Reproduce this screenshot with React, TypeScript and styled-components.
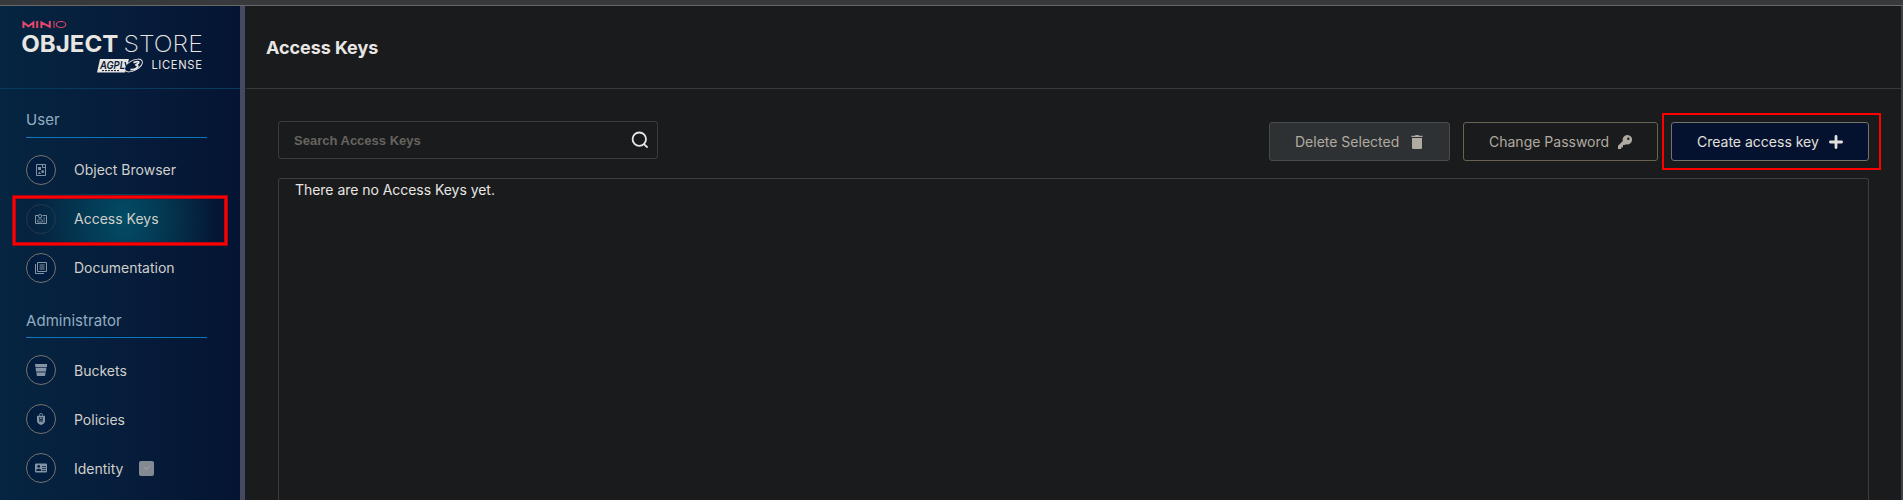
import React from "react";
import styled, { createGlobalStyle } from "styled-components";

const Global = createGlobalStyle`
  *, *::before, *::after { box-sizing: border-box; }
  body { margin: 0; background: #1a1b1d; overflow: hidden; }
  body, button { font-family: Inter, "Liberation Sans", sans-serif; }
`;

const Page = styled.div`
  height: 500px;
  display: flex;
  flex-direction: column;
  overflow: hidden;
`;
const TopStrip = styled.div`
  height: 6px;
  flex: none;
  background: #38393d;
  border-bottom: 1px solid #66686a;
`;
const Body = styled.div`
  flex: 1;
  min-height: 0;
  display: flex;
  border-right: 2px solid #3c4146;
`;
const Sidebar = styled.aside`
  width: 246px;
  flex: none;
  border-right: 1px solid #14193a;
  display: flex;
`;
const SidebarInner = styled.div`
  width: 240px;
  background: linear-gradient(90deg, #052541 0%, #061d3b 50%, #051433 100%);
`;
const Divider = styled.div`
  width: 5px;
  background: #464a5c;
`;
const LogoArea = styled.div`
  height: 83px;
  border-bottom: 1px solid #073a5c;
`;
const Group = styled.nav<{ $top: number }>`
  margin: ${(p) => p.$top}px 0 0 26px;
  width: 181px;
`;
const GroupTitle = styled.h2<{ $drop?: number }>`
  margin: 0 0 7px;
  height: 30px;
  padding-top: ${(p) => p.$drop ?? 0}px;
  line-height: 24px;
  border-bottom: 1px solid #0d76bb;
  font-size: 15px;
  font-weight: 400;
  letter-spacing: 0.05px;
  color: #92adc1;
`;
const Item = styled.a<{ $active?: boolean }>`
  position: relative;
  height: 49px;
  margin: 0 -21px 0 -14px;
  padding-left: 14px;
  display: flex;
  align-items: center;
  font-size: 14px;
  color: #d0cfcb;
  background: ${(p) => (p.$active ? "radial-gradient(ellipse 92px 150px at 112px 50%, #034b63 0%, rgba(3,62,88,.8) 45%, rgba(4,34,62,0) 100%)" : "none")};
`;
const Label = styled.span<{ $low?: boolean }>`
  padding-top: ${(p) => (p.$low ? 2 : 0)}px;
`;
const Circle = styled.span<{ $active?: boolean }>`
  width: 30px;
  height: 30px;
  margin-right: 18px;
  border: 1px solid ${(p) => (p.$active ? "#24384a" : "#77736b")};
  border-radius: 50%;
  background: ${(p) => (p.$active ? "transparent" : "#021d3d")};
  color: #8494a4;
  display: grid;
  place-items: center;
`;
const Expand = styled.span`
  width: 15px;
  height: 15px;
  margin: 1px 0 0 15.5px;
  border-radius: 2px;
  background: #848a94;
  display: grid;
  place-items: center;
`;
const Highlight = styled.span<{ $inset: string; $soft?: boolean }>`
  position: absolute;
  inset: ${(p) => p.$inset};
  border: 2px solid #fe0000;
  box-shadow: ${(p) => (p.$soft ? "0 0 0 1px #9c0a18, inset 0 0 0 1px #b00814" : "none")};
  pointer-events: none;
`;
const Main = styled.main`
  flex: 1;
  min-width: 0;
  display: flex;
  flex-direction: column;
  background: #1a1b1d;
`;
const Header = styled.header`
  height: 83px;
  flex: none;
  padding: 1px 0 0 20px;
  display: flex;
  align-items: center;
  border-bottom: 1px solid #393a3c;
`;
const Title = styled.h1`
  margin: 0;
  font-size: 18px;
  font-weight: 700;
  letter-spacing: -0.06px;
  color: #e8e6e3;
`;
const Content = styled.section`
  flex: 1;
  min-height: 0;
  padding: 32px 32px 0;
  display: flex;
  flex-direction: column;
`;
const Toolbar = styled.div`
  display: flex;
  align-items: flex-start;
  height: 57px;
  flex: none;
`;
const Search = styled.label`
  width: 380px;
  height: 38px;
  margin-right: auto;
  padding: 0 8px 0 15px;
  display: flex;
  align-items: center;
  border: 1px solid #3b3c3e;
  border-radius: 3px;
`;
const SearchInput = styled.input`
  flex: 1;
  min-width: 0;
  padding: 1px 0 0;
  border: 0;
  outline: 0;
  background: none;
  color: #e8e6e3;
  font: 700 13px "Liberation Sans", sans-serif;
  &::placeholder { color: #66645f; opacity: 1; }
`;
const Button = styled.button<{ $kind: "disabled" | "plain" | "primary"; $width: number }>`
  position: relative;
  width: ${(p) => p.$width}px;
  height: 39px;
  margin: 1px 0 0 13px;
  padding: 0 25px;
  display: flex;
  align-items: center;
  justify-content: space-between;
  white-space: nowrap;
  border: 1px solid ${(p) => (p.$kind === "disabled" ? "#484c4f" : p.$kind === "plain" ? "#696353" : "#77726a")};
  border-radius: 3px;
  background: ${(p) => (p.$kind === "disabled" ? "#2d3133" : p.$kind === "plain" ? "transparent" : "#05122f")};
  color: ${(p) => (p.$kind === "primary" ? "#e2e0dd" : "#b0aaa0")};
  font-size: 14px;
`;
const Panel = styled.div`
  flex: 1;
  padding: 2px 16px;
  border: 1px solid #3b3c3e;
  border-bottom: 0;
  border-radius: 3px 3px 0 0;
  font-size: 14px;
  line-height: 17px;
  letter-spacing: -0.04px;
  color: #e8e6e3;
`;

const Logo = () => (
  <svg width="240" height="82" viewBox="0 6 240 82" fontFamily="Inter, sans-serif" fill="#e8e6e3">
    <g fill="none" stroke="#e7476a">
      <path d="M23.4 28v-5.6l5 3.8 5-3.8V28M37.2 21v7M41.4 28v-5.6l8.4 4.4V21" strokeWidth="2" />
      <path d="M54 21v7" strokeWidth="1" />
      <ellipse cx="61" cy="24.5" rx="4.8" ry="3" strokeWidth="1.1" />
    </g>
    <text x="21.3" y="52.2" fontSize="23.2" fontWeight="700" textLength="97" lengthAdjust="spacingAndGlyphs">OBJECT</text>
    <text x="123.4" y="52.2" fontSize="23.2" fontWeight="250" textLength="79.5" lengthAdjust="spacingAndGlyphs">STORE</text>
    <path d="M100 59h29l-4 13.5H97z" />
    <ellipse cx="133.5" cy="65.5" rx="9.8" ry="5" transform="rotate(-28 133.5 65.5)" fill="#061b39" stroke="#e8e6e3" strokeWidth="1" />
    <text x="100" y="68.8" fontSize="11" fontStyle="italic" fontWeight="600" fill="#061b39" textLength="25" lengthAdjust="spacingAndGlyphs">AGPL</text>
    <path d="M102 70.6h17" stroke="#061b39" strokeWidth="1" strokeDasharray="2 1" />
    <path d="M125 62l2 7 7-7.500" fill="none" stroke="#061b39" strokeWidth="1.300" />
    <path d="M133.500 62.800c5-2.500 8-.5 2 2.200 5 0 1 5.500-5 4.500" fill="none" stroke="#e8e6e3" strokeWidth="1.800" />
    <text x="151.400" y="69.200" fontSize="11.200" textLength="50.500">LICENSE</text>
  </svg>
);

const BrowserIcon = () => (
  <svg width="12" height="12" viewBox="0 0 12 12" fill="currentColor">
    <path d="M1.5.5h9v11h-9zM7.5.5v3h3" fill="none" stroke="currentColor" />
    <path d="M3 3h3v3H3zM3 10l1.5-2.5L6 10z" />
    <circle cx="7.7" cy="7.7" r="1.4" />
  </svg>
);
const AccessIcon = () => (
  <svg width="12" height="12" viewBox="0 0 12 12" fill="none" stroke="currentColor">
    <path d="M3 2.5H.5v8h11v-8H7.5" />
    <circle cx="5" cy="3.2" r="1.7" />
    <path d="M2.7 9V8c0-1.5 1-2 2.3-2s2.3.5 2.3 2v1zM8.5 5H10M8.5 7H10M8.5 9H10" strokeWidth=".9" />
  </svg>
);
const DocsIcon = () => (
  <svg width="12" height="12" viewBox="0 0 12 12" fill="none" stroke="currentColor">
    <path d="M2.5.5h9v9h-9zM.5 2v9.5H9M4.5 3h5M4.5 5h5M4.5 7h5" />
  </svg>
);
const BucketIcon = () => (
  <svg width="12" height="12" viewBox="0 0 12 12" fill="currentColor">
    <path d="M0 0h12v3H.4zM.6 4h10.8l-.4 3.5H1zM1.3 8.5h9.4L10 12H2z" />
    <path d="M.6 3.5h10.8M1 8h10" stroke="currentColor" opacity=".35" />
  </svg>
);
const PolicyIcon = () => (
  <svg width="12" height="12" viewBox="0 0 12 12" fill="currentColor">
    <path d="M4.5 2.5V1.3q1.5-1.6 3 0v1.2" fill="none" stroke="currentColor" />
    <path fillRule="evenodd" d="M2 2.8h8v5.4Q10 10.5 6 12 2 10.5 2 8.2zM4.3 4v4.8h3.4V4z" />
    <circle cx="6" cy="5.3" r="1" />
    <path d="M4.8 8.3V7.5h2.4v.8z" />
  </svg>
);
const IdentityIcon = () => (
  <svg width="12" height="12" viewBox="0 0 12 12" fill="currentColor">
    <path fillRule="evenodd" d="M1 1.5h10q1 0 1 1v7q0 1-1 1H1q-1 0-1-1v-7q0-1 1-1zM3.7 3a1.4 1.4 0 1 0 0 2.8 1.4 1.4 0 0 0 0-2.8zM1.3 9h4.8V8Q5.8 6.7 3.7 6.7T1.3 8zM7 4v.8h4V4zM7 6v.8h4V6zM7 8v.8h4V8z" />
  </svg>
);
const SearchIcon = () => (
  <svg width="18" height="18" viewBox="0 0 18 18" fill="none" stroke="#e8e6e3" strokeWidth="1.8">
    <circle cx="8.3" cy="8.2" r="6.7" />
    <path d="m12.6 12.9 4 3.6" />
  </svg>
);
const TrashIcon = () => (
  <svg width="14" height="14" viewBox="0 0 14 14" fill="currentColor">
    <path d="M1.5.8H5L5.6 0h2.8L9 .8h3.5V2h-11z" />
    <path d="M2 3h10v9.5q0 1.5-1.5 1.5h-7Q2 14 2 12.5z" />
  </svg>
);
const KeyIcon = () => (
  <svg width="14" height="14" viewBox="0 0 14 14" fill="currentColor">
    <path fillRule="evenodd" d="M9.3 0A4.7 4.7 0 0 0 4.8 6L0 10.8V14h3.2v-1.8H5V10h1.6L8 9.2A4.7 4.7 0 1 0 9.3 0zm1 2.5a1.2 1.2 0 1 1 0 2.4 1.2 1.2 0 0 1 0-2.4z" />
  </svg>
);
const PlusIcon = () => (
  <svg width="14" height="14" viewBox="0 0 14 14" stroke="currentColor" strokeWidth="2.8" strokeLinecap="round">
    <path d="M7 1.4v11.2M1.4 7h11.2" />
  </svg>
);

export default function App() {
  return (
    <Page>
      <Global />
      <TopStrip />
      <Body>
        <Sidebar>
          <SidebarInner>
            <LogoArea><Logo /></LogoArea>
            <Group $top={19}>
              <GroupTitle>User</GroupTitle>
              <Item><Circle><BrowserIcon /></Circle><Label>Object Browser</Label></Item>
              <Item $active>
                <Circle $active><AccessIcon /></Circle><Label>Access Keys</Label>
                <Highlight $soft $inset="2px 1px -2px 1px" />
              </Item>
              <Item><Circle><DocsIcon /></Circle><Label>Documentation</Label></Item>
            </Group>
            <Group $top={16}>
              <GroupTitle $drop={1}>Administrator</GroupTitle>
              <Item><Circle><BucketIcon /></Circle><Label $low>Buckets</Label></Item>
              <Item><Circle><PolicyIcon /></Circle><Label $low>Policies</Label></Item>
              <Item>
                <Circle><IdentityIcon /></Circle><Label $low>Identity</Label>
                <Expand>
                  <svg width="7" height="5" viewBox="0 0 7 5" fill="none" stroke="#a7a49d"><path d="m.5.5 3 3 3-3" /></svg>
                </Expand>
              </Item>
            </Group>
          </SidebarInner>
          <Divider />
        </Sidebar>
        <Main>
          <Header><Title>Access Keys</Title></Header>
          <Content>
            <Toolbar>
              <Search><SearchInput placeholder="Search Access Keys" /><SearchIcon /></Search>
              <Button $kind="disabled" $width={181}>Delete Selected<TrashIcon /></Button>
              <Button $kind="plain" $width={195}>Change Password<KeyIcon /></Button>
              <Button $kind="primary" $width={198}>
                Create access key<PlusIcon />
                <Highlight $inset="-10px -13px -10px -10px" />
              </Button>
            </Toolbar>
            <Panel>There are no Access Keys yet.</Panel>
          </Content>
        </Main>
      </Body>
    </Page>
  );
}
